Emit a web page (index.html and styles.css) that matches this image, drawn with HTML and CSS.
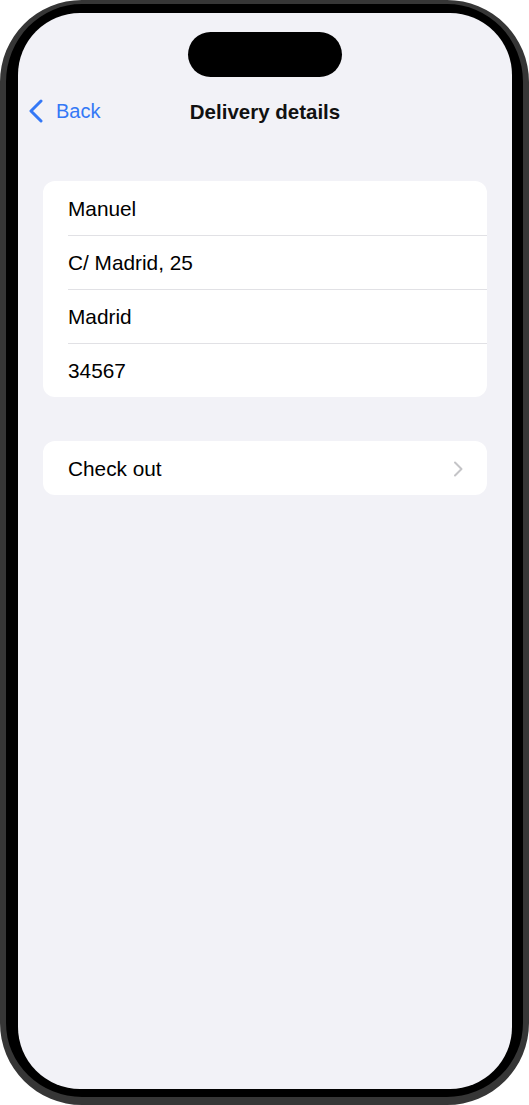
FILE: index.html
```html
<!DOCTYPE html>
<html>
<head>
<meta charset="utf-8">
<link rel="stylesheet" href="styles.css">
</head>
<body>
<div class="frame">
  <div class="screen">
    <div class="island"></div>
    <div class="nav">
      <div class="back">
        <svg class="back-chevron" width="16" height="24" viewBox="0 0 16 24"><path d="M13 2 L3 12 L13 22" fill="none" stroke="#3478f6" stroke-width="3" stroke-linecap="round" stroke-linejoin="round"/></svg>
        <span>Back</span>
      </div>
      <div class="title">Delivery details</div>
      <div></div>
    </div>
    <div class="card">
      <div class="row">Manuel</div>
      <div class="row">C/ Madrid, 25</div>
      <div class="row">Madrid</div>
      <div class="row">34567</div>
    </div>
    <div class="card second">
      <div class="row link">
        <span>Check out</span>
        <svg width="10" height="16" viewBox="0 0 10 16"><path d="M2 1.5 L8.5 8 L2 14.5" fill="none" stroke="#c4c4c7" stroke-width="2" stroke-linecap="round" stroke-linejoin="round"/></svg>
      </div>
    </div>
  </div>
</div>
</body>
</html>
```

FILE: styles.css
```css
* { box-sizing: border-box; }
html, body { margin: 0; padding: 0; background: #ffffff; }
body { font-family: "Liberation Sans", Arial, sans-serif; }
.frame {
  width: 529px;
  height: 1105px;
  background: #000;
  border-style: solid;
  border-color: #363636;
  border-width: 4px 6px 8px 6px;
  border-radius: 82px;
  padding: 9px 11px 8px 12px;
}
.screen {
  width: 494px;
  height: 1076px;
  background: #f2f2f7;
  border-radius: 62px;
  overflow: hidden;
  display: flex;
  flex-direction: column;
}
.island {
  align-self: center;
  margin-top: 19px;
  width: 154px;
  height: 45px;
  border-radius: 23px;
  background: #000;
  flex: none;
}
.nav {
  margin-top: 12px;
  height: 44px;
  display: grid;
  grid-template-columns: 1fr auto 1fr;
  align-items: center;
  flex: none;
}
.back {
  display: flex;
  align-items: center;
  padding-left: 10px;
  color: #3478f6;
  font-size: 20px;
  gap: 12px;
}
.back-chevron { display: block; }
.title {
  font-size: 20.5px;
  font-weight: bold;
  color: #111;
  padding-top: 1px;
}
.card {
  margin: 48px 25px 0;
  background: #fff;
  border-radius: 12px;
  flex: none;
}
.card.second { margin-top: 44px; }
.row {
  height: 54px;
  margin-left: 25px;
  display: flex;
  align-items: center;
  font-size: 20.8px;
  color: #000;
  border-top: 1px solid #e1e1e5;
  padding-top: 1px;
}
.row:first-child { border-top: none; }
.row.link {
  justify-content: space-between;
  padding-right: 24px;
}
.row.link svg { display: block; }
```
